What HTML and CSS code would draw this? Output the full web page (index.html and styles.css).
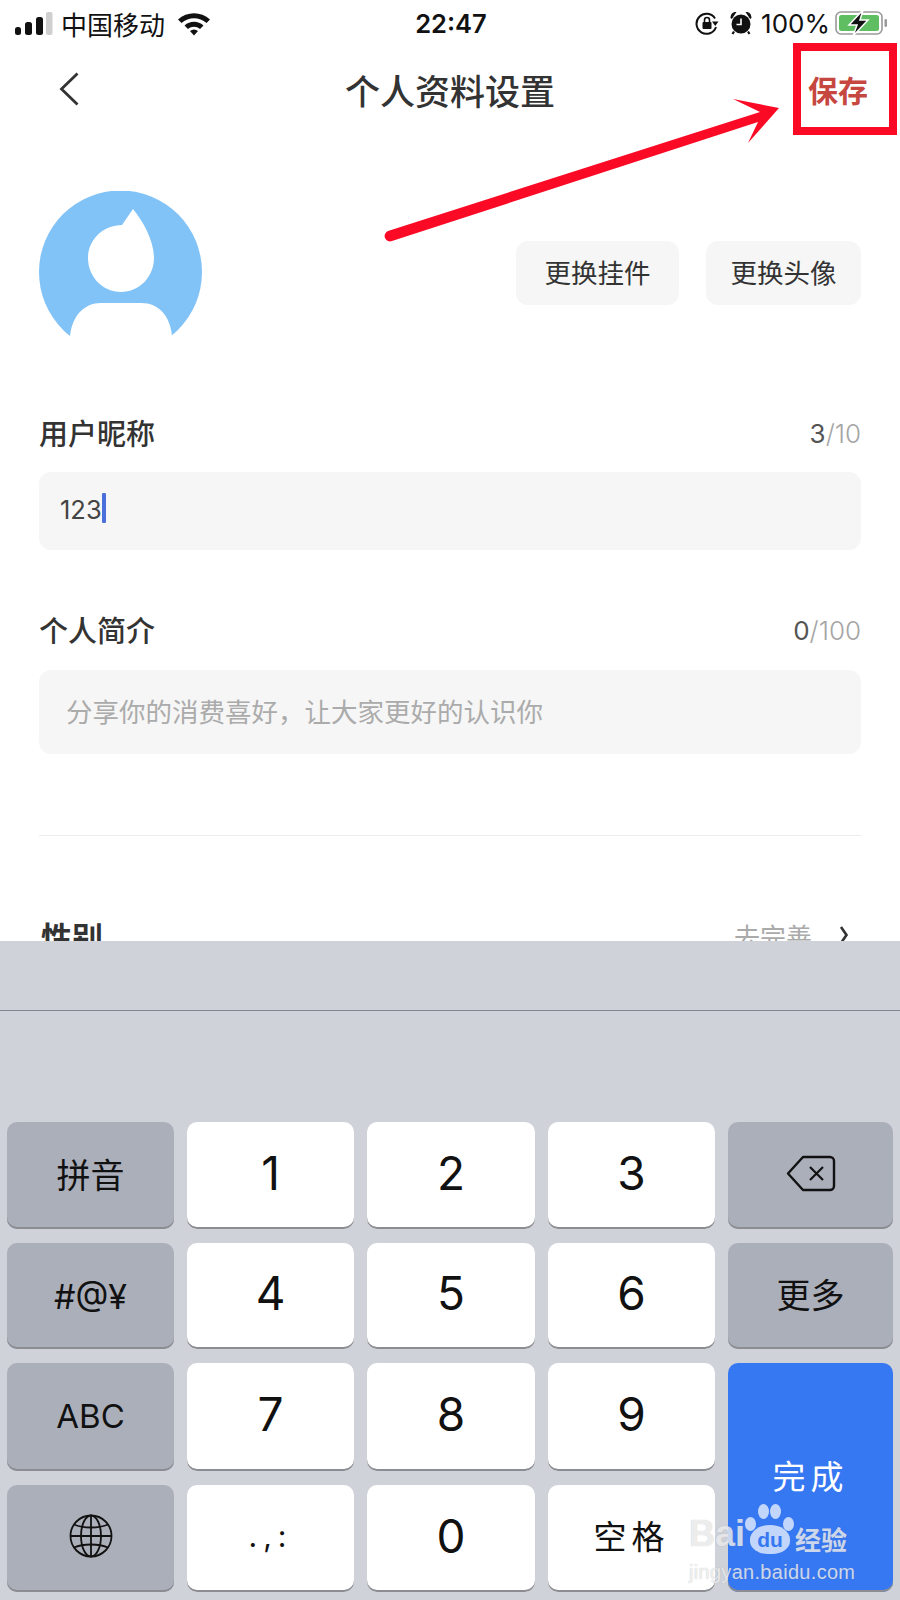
FILE: index.html
```html
<!DOCTYPE html>
<html lang="zh-CN">
<head>
    <meta charset="UTF-8">
    <meta name="viewport" content="width=device-width, initial-scale=1.0">
    <title>个人资料设置</title>
    <link rel="stylesheet" href="styles.css">
</head>
<body>
<div class="screen">
    <div class="app">
        <!-- status bar -->
        <div class="status-bar">
            <div class="status-left">
                <svg class="signal" width="40" height="24" viewBox="0 0 40 24">
                    <rect x="1" y="16" width="6" height="8" rx="2.5" fill="#111"/>
                    <rect x="11" y="11" width="7" height="13" rx="2.5" fill="#111"/>
                    <rect x="22" y="6" width="7" height="18" rx="2.5" fill="#111"/>
                    <rect x="32" y="1" width="6.5" height="23" rx="2" fill="#cfcfcf"/>
                </svg>
                <span class="carrier">中国移动</span>
                <svg width="34" height="25" viewBox="0 0 34 25">
                    <path d="M1 8.5C10 0 24 0 33 8.5L29.5 12C22.5 5.5 11.5 5.5 4.500 12Z" fill="#111"/>
                    <path d="M7.500 14.500C13 9.500 21 9.500 26.500 14.500L23 18C19.500 15 14.500 15 11 18Z" fill="#111"/>
                    <path d="M13 20C15.500 18 18.500 18 21 20L17 24.500Z" fill="#111"/>
                </svg>
            </div>
            <div class="status-time">22:47</div>
            <div class="status-right">
                <svg width="24" height="24" viewBox="0 0 24 24">
                    <path d="M20 7.500A10 10 0 1 0 21 16" fill="none" stroke="#111" stroke-width="2"/>
                    <path d="M17 10.500H23.500L20.200 15Z" fill="#111"/>
                    <rect x="7.500" y="11" width="9" height="7" rx="1" fill="#111"/>
                    <path d="M9.500 11V9a2.500 2.500 0 0 1 5 0v2" fill="none" stroke="#111" stroke-width="1.600"/>
                </svg>
                <svg class="alarm" width="22" height="24" viewBox="0 0 22 24">
                    <path d="M0.500 7C0.500 2.500 3.500 0.500 6.500 1L1.800 8Z M21.500 7C21.500 2.500 18.500 0.500 15.500 1L20.200 8Z" fill="#111"/>
                    <path d="M4 20.500L2.500 23M18 20.500L19.500 23" stroke="#111" stroke-width="2.200"/>
                    <circle cx="11" cy="13" r="9.500" fill="#111"/>
                    <path d="M11 7.500V13.500H6.500" fill="none" stroke="#fff" stroke-width="1.600"/>
                </svg>
                <span class="battery-text">100%</span>
                <svg class="battery" width="53" height="26" viewBox="0 0 53 26">
                    <rect x="1" y="2" width="46" height="22" rx="5" fill="none" stroke="#9a9a9a" stroke-width="1.600"/>
                    <rect x="4" y="5" width="40" height="16" rx="2.500" fill="#5fbd62"/>
                    <rect x="49.500" y="9" width="2.500" height="8" rx="1.200" fill="#9a9a9a"/>
                    <path d="M28 0L14 15H22L18 26L33 10H25Z" fill="#111" stroke="#fff" stroke-width="1.500"/>
                </svg>
            </div>
        </div>

        <div class="nav">
            <svg class="back" width="20" height="34" viewBox="0 0 20 34">
                <path d="M18.500 1.500L2.500 17L18.500 32.500" fill="none" stroke="#333" stroke-width="2.800"/>
            </svg>
            <div class="nav-title">个人资料设置</div>
            <div class="nav-save">保存</div>
        </div>

        <div class="content">
            <div class="avatar-row">
                <svg class="avatar" width="163" height="145" viewBox="0 0 163 145">
                    <circle cx="81.500" cy="81" r="81.500" fill="#82c3f7"/>
                    <path d="M83 34C64 34 49 49 49 67C49 86 64 101 82 101C100 101 115 86 115 67C115 50 104 30 94 18Z" fill="#fff"/>
                    <path d="M31 145C33 125 45 112 62 112H102C120 112 131 125 133 145Z" fill="#fff"/>
                </svg>
                <div class="avatar-btns">
                    <div class="btn btn-wide">更换挂件</div>
                    <div class="btn">更换头像</div>
                </div>
            </div>

            <div class="field-head field-head-first">
                <span class="field-label">用户昵称</span>
                <span class="counter"><b>3</b>/10</span>
            </div>
            <div class="field field-name">
                <span class="field-value">123</span><span class="caret"></span>
            </div>

            <div class="field-head">
                <span class="field-label">个人简介</span>
                <span class="counter"><b>0</b>/100</span>
            </div>
            <div class="field field-bio">分享你的消费喜好，让大家更好的认识你</div>

            <div class="divider"></div>

            <div class="row">
                <span class="row-label">性别</span>
                <span class="row-right">
                    <span class="row-hint">去完善</span>
                    <svg width="10" height="18" viewBox="0 0 10 18">
                        <path d="M2 1L7.500 9L2 17" fill="none" stroke="#333" stroke-width="2.600"/>
                    </svg>
                </span>
            </div>
        </div>
    </div>

    <div class="keyboard">
        <div class="candidates"></div>
        <div class="keys">
            <div class="key key-fn key-cjk">拼音</div>
            <div class="key key-num">1</div>
            <div class="key key-num">2</div>
            <div class="key key-num">3</div>
            <div class="key key-fn">
                <svg width="50" height="37" viewBox="0 0 50 37">
                    <path d="M17 2H44a4 4 0 0 1 4 4V31a4 4 0 0 1-4 4H17L2 18.500Z" fill="none" stroke="#111" stroke-width="2.400" stroke-linejoin="round"/>
                    <path d="M24 12L37 25M37 12L24 25" stroke="#111" stroke-width="2.200"/>
                </svg>
            </div>
            <div class="key key-fn key-sym">#@¥</div>
            <div class="key key-num">4</div>
            <div class="key key-num">5</div>
            <div class="key key-num">6</div>
            <div class="key key-fn key-cjk">更多</div>
            <div class="key key-fn key-abc">ABC</div>
            <div class="key key-num">7</div>
            <div class="key key-num">8</div>
            <div class="key key-num">9</div>
            <div class="key key-done">完成</div>
            <div class="key key-fn">
                <svg width="44" height="44" viewBox="0 0 44 44">
                    <g fill="none" stroke="#111" stroke-width="1.800">
                        <circle cx="22" cy="22" r="20.500"/>
                        <ellipse cx="22" cy="22" rx="10" ry="20.500"/>
                        <path d="M22 1.500V42.500M1.500 22H42.500"/>
                        <path d="M5 10.500C14 14.500 30 14.500 39 10.500M5 33.500C14 29.500 30 29.500 39 33.500"/>
                    </g>
                </svg>
            </div>
            <div class="key key-num key-punct">.,:</div>
            <div class="key key-num">0</div>
            <div class="key key-num key-space">空格</div>
        </div>
    </div>

    <!-- annotation drawn over the screenshot -->
    <svg class="mark" width="900" height="260" viewBox="0 0 900 260">
        <rect x="797" y="47" width="96" height="84" fill="none" stroke="#fb0a26" stroke-width="8"/>
        <path d="M388 231L760 112L733 99L779 108L748 143L758 122L392 241A5 5 0 0 1 388 231Z" fill="#fb0a26"/>
    </svg>

    <div class="watermark">
        <div class="wm-top">
            <span class="wm-bai">Bai</span>
            <span class="wm-paw">
                <i class="toe toe-a"></i><i class="toe toe-b"></i><i class="toe toe-c"></i><i class="toe toe-d"></i>
                <span class="wm-pad">du</span>
            </span>
            <span class="wm-cn">经验</span>
        </div>
        <div class="wm-url">jingyan.baidu.com</div>
    </div>
</div>
</body>
</html>
```

FILE: styles.css
```css
body {
    margin: 0;
    background: #fff;
    font-family: "Inter", "Noto Sans CJK SC", sans-serif;
    color: #333;
}
.screen {
    position: relative;
    width: 900px;
    height: 1600px;
    overflow: hidden;
}
.app {
    height: 941px;
    overflow: hidden;
}

/* status bar */
.status-bar {
    height: 46px;
    display: grid;
    grid-template-columns: 1fr auto 1fr;
    align-items: center;
    padding: 0 12px 0 14px;
    color: #111;
}
.status-left {
    display: flex;
    align-items: center;
}
.signal {
    margin-right: 7px;
}
.carrier {
    font-family: "Noto Sans CJK SC", sans-serif;
    font-size: 26px;
    margin-right: 12px;
}
.status-time {
    font-size: 25.500px;
    font-weight: 600;
}
.status-right {
    display: flex;
    align-items: center;
    justify-content: flex-end;
}
.alarm {
    margin-left: 11px;
}
.battery-text {
    font-size: 26px;
    margin-left: 9px;
    margin-right: 5px;
}

/* nav */
.nav {
    height: 90px;
    box-sizing: border-box;
    padding: 0 32px 4px;
    display: grid;
    grid-template-columns: 1fr auto 1fr;
    align-items: center;
}
.back {
    margin-left: 27px;
}
.nav-title {
    font-family: "Noto Sans CJK SC", sans-serif;
    font-size: 35px;
    font-weight: 500;
    color: #333;
}
.nav-save {
    font-family: "Noto Sans CJK SC", sans-serif;
    font-size: 30px;
    font-weight: 700;
    color: #c6473f;
    text-align: right;
}

/* form */
.content {
    padding: 55px 39px 0;
    font-family: "Noto Sans CJK SC", sans-serif;
}
.avatar-row {
    display: flex;
    justify-content: space-between;
    align-items: flex-start;
}
.avatar {
    display: block;
}
.avatar-btns {
    display: flex;
    gap: 27px;
    margin-top: 50px;
}
.btn {
    height: 64px;
    line-height: 62px;
    padding: 0 24.500px;
    background: #f6f6f6;
    border-radius: 12px;
    font-size: 26.500px;
    color: #333;
}
.btn-wide {
    padding: 0 28.500px;
}
.field-head {
    height: 40px;
    display: flex;
    justify-content: space-between;
    align-items: center;
    margin-top: 60px;
    margin-bottom: 20px;
}
.field-head-first {
    margin-top: 77px;
    margin-bottom: 19px;
}
.field-label {
    font-size: 29px;
    font-weight: 500;
    color: #333;
    margin-bottom: 3px;
}
.counter {
    font-family: "Inter", sans-serif;
    font-size: 26px;
    font-weight: 300;
    color: #a5a5a5;
}
.counter b {
    font-weight: 400;
    color: #555;
}
.field {
    background: #f6f6f6;
    border-radius: 12px;
    display: flex;
    align-items: center;
}
.field-name {
    height: 78px;
    padding-left: 21px;
}
.field-value {
    font-family: "Inter", sans-serif;
    font-size: 25.500px;
    color: #444;
    margin-bottom: 4px;
}
.caret {
    width: 4px;
    height: 30px;
    margin-bottom: 7px;
    background: #4a6fdc;
    border-radius: 1px;
}
.field-bio {
    height: 84px;
    box-sizing: border-box;
    padding: 0 0 3px 27px;
    font-size: 26.500px;
    color: #ababab;
}
.divider {
    height: 1px;
    margin-top: 81px;
    background: #eee;
}
.row {
    display: flex;
    justify-content: space-between;
    align-items: center;
    height: 40px;
    margin-top: 79px;
}
.row-label {
    font-size: 31px;
    font-weight: 700;
    color: #333;
    margin-left: 2px;
}
.row-right {
    display: flex;
    align-items: center;
    gap: 27px;
    padding-right: 12px;
}
.row-hint {
    font-size: 26px;
    color: #aaa;
}

/* keyboard */
.keyboard {
    height: 659px;
    background: #d0d2d9;
}
.candidates {
    height: 69px;
    border-bottom: 1px solid #85858f;
}
.keys {
    display: grid;
    grid-template-columns: 167px 167px 168px 167px 165px;
    grid-template-rows: 107px 106px 108px 107px;
    gap: 14px 13px;
    padding: 111px 0 0 7px;
}
.key {
    display: flex;
    align-items: center;
    justify-content: center;
    border-radius: 10px;
    box-shadow: inset 0 -2px 0 #8c8d92;
    color: #111;
    box-sizing: border-box;
}
.key-num {
    background: #fff;
    font-size: 46px;
    padding-bottom: 6px;
}
.key-fn {
    background: #abafba;
    font-size: 29px;
    padding-bottom: 5px;
}
.key-cjk {
    font-family: "Noto Sans CJK SC", sans-serif;
    font-size: 34px;
}
.key-sym {
    font-size: 34px;
    padding-bottom: 0;
}
.key-abc {
    font-size: 33px;
    padding-bottom: 3px;
}
.key-punct {
    font-size: 30px;
    letter-spacing: 6px;
}
.key-space {
    font-family: "Noto Sans CJK SC", sans-serif;
    font-size: 33px;
    letter-spacing: 5px;
    padding-bottom: 8px;
}
.key-done {
    grid-row: span 2;
    background: #3677f2;
    color: #fff;
    font-family: "Noto Sans CJK SC", sans-serif;
    font-size: 33px;
    letter-spacing: 5px;
    padding-bottom: 6px;
}

/* red annotation and watermark sit on top of the screenshot */
.mark {
    position: absolute;
    left: 0;
    top: 0;
}
.watermark {
    position: absolute;
    left: 689px;
    top: 1504px;
    width: 172px;
    color: rgba(255, 255, 255, 0.72);
    font-family: "Liberation Sans", sans-serif;
    text-shadow: 0 0 1px rgba(110, 110, 120, 0.45);
}
.wm-top {
    display: flex;
    align-items: flex-end;
    height: 54px;
    white-space: nowrap;
}
.wm-bai {
    font-size: 36px;
    font-weight: 700;
    line-height: 48px;
}
.wm-paw {
    position: relative;
    width: 50px;
    height: 54px;
    flex: none;
}
.toe {
    position: absolute;
    background: #c2d6fb;
    border-radius: 50%;
}
.toe-a { left: 0; top: 13px; width: 11px; height: 14px; }
.toe-b { left: 13px; top: 0; width: 11px; height: 15px; }
.toe-c { left: 25px; top: 0; width: 11px; height: 15px; }
.toe-d { left: 38px; top: 13px; width: 11px; height: 14px; }
.wm-pad {
    position: absolute;
    left: 5px;
    top: 21px;
    width: 40px;
    height: 29px;
    background: #c2d6fb;
    border-radius: 50% 50% 45% 45%;
    color: #3677f2;
    font-size: 21px;
    font-weight: 700;
    line-height: 29px;
    text-align: center;
    text-shadow: none;
}
.wm-cn {
    font-family: "Noto Sans CJK SC", sans-serif;
    font-size: 26px;
    font-weight: 700;
    line-height: 38px;
}
.wm-url {
    font-size: 20px;
    letter-spacing: 0.300px;
    line-height: 24px;
    margin-top: 2px;
}
```
